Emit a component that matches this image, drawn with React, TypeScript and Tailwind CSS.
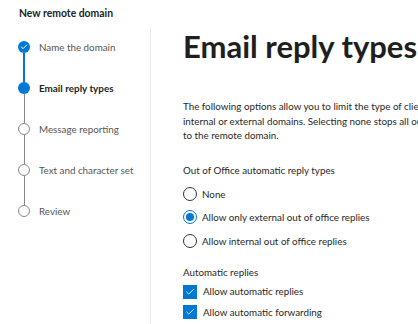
import { Check } from 'lucide-react';

const steps = [
  { label: 'Name the domain', state: 'done' },
  { label: 'Email reply types', state: 'current' },
  { label: 'Message reporting', state: 'todo' },
  { label: 'Text and character set', state: 'todo' },
  { label: 'Review', state: 'todo' },
];

function StepDot({ state }: { state: string }) {
  if (state === 'done') {
    return (
      <div className="flex size-[12px] items-center justify-center rounded-full bg-[#0078d4]">
        <Check className="size-[8px] text-white" strokeWidth={3} />
      </div>
    );
  }
  if (state === 'current') {
    return <div className="size-[12px] rounded-full bg-[#0078d4]" />;
  }
  return <div className="size-[12px] rounded-full border border-[#8a8886] bg-white" />;
}

function Radio({ label, checked }: { label: string; checked?: boolean }) {
  return (
    <div className="flex h-[23.5px] items-center gap-[5px]">
      <div
        className={
          'flex size-[14px] items-center justify-center rounded-full border ' +
          (checked ? 'border-[#0078d4]' : 'border-[#323130]')
        }
      >
        {checked ? <div className="size-[8px] rounded-full bg-[#0078d4]" /> : null}
      </div>
      <span>{label}</span>
    </div>
  );
}

function CheckRow({ label }: { label: string }) {
  return (
    <div className="flex h-[20.5px] items-center gap-[6px]">
      <div className="flex size-[14px] items-center justify-center bg-[#0078d4]">
        <Check className="size-[10px] text-white" strokeWidth={2} />
      </div>
      <span>{label}</span>
    </div>
  );
}

export default function App() {
  return (
    <div
      className="h-[324px] w-[418px] overflow-hidden bg-white text-[9.8px] text-[#292827]"
      style={{ fontFamily: 'Lato, "Noto Sans", sans-serif' }}
    >
      <div className="flex h-[27px] items-center px-[19px] text-[10.4px] font-bold text-[#201f1e]">
        New remote domain
      </div>
      <div className="flex h-[297px]">
        <nav className="w-[151px] shrink-0 border-r border-[#edebe9] pt-[14px]">
          {steps.map((s, i) => (
            <div key={s.label} className="flex h-[41px] gap-[9px] pl-[18px]">
              <div className="flex w-[12px] flex-col items-center">
                <StepDot state={s.state} />
                {i < steps.length - 1 ? (
                  <div
                    className={
                      'grow ' + (i === 0 ? 'w-[2px] bg-[#0078d4]' : 'w-[1px] bg-[#8a8886]')
                    }
                  />
                ) : null}
              </div>
              <div
                className={
                  'leading-[12px] ' +
                  (s.state === 'current' ? 'text-[9.9px] font-bold text-[#201f1e]' : 'text-[#575553]')
                }
              >
                {s.label}
              </div>
            </div>
          ))}
        </nav>
        <main className="min-w-0 grow pl-[32px]">
          <h1 className="mt-[-1px] whitespace-nowrap text-[31px] font-bold leading-[40px] text-[#201f1e]">
            Email reply types
          </h1>
          <p className="mt-[33px] whitespace-nowrap leading-[14.5px]">
            The following options allow you to limit the type of client
            <br />
            internal or external domains. Selecting none stops all out
            <br />
            to the remote domain.
          </p>
          <div className="mt-[20px]">Out of Office automatic reply types</div>
          <div className="mt-[5px]">
            <Radio label="None" />
            <Radio label="Allow only external out of office replies" checked />
            <Radio label="Allow internal out of office replies" />
          </div>
          <div className="mt-[12px]">Automatic replies</div>
          <div className="mt-[2px]">
            <CheckRow label="Allow automatic replies" />
            <CheckRow label="Allow automatic forwarding" />
          </div>
        </main>
      </div>
    </div>
  );
}
